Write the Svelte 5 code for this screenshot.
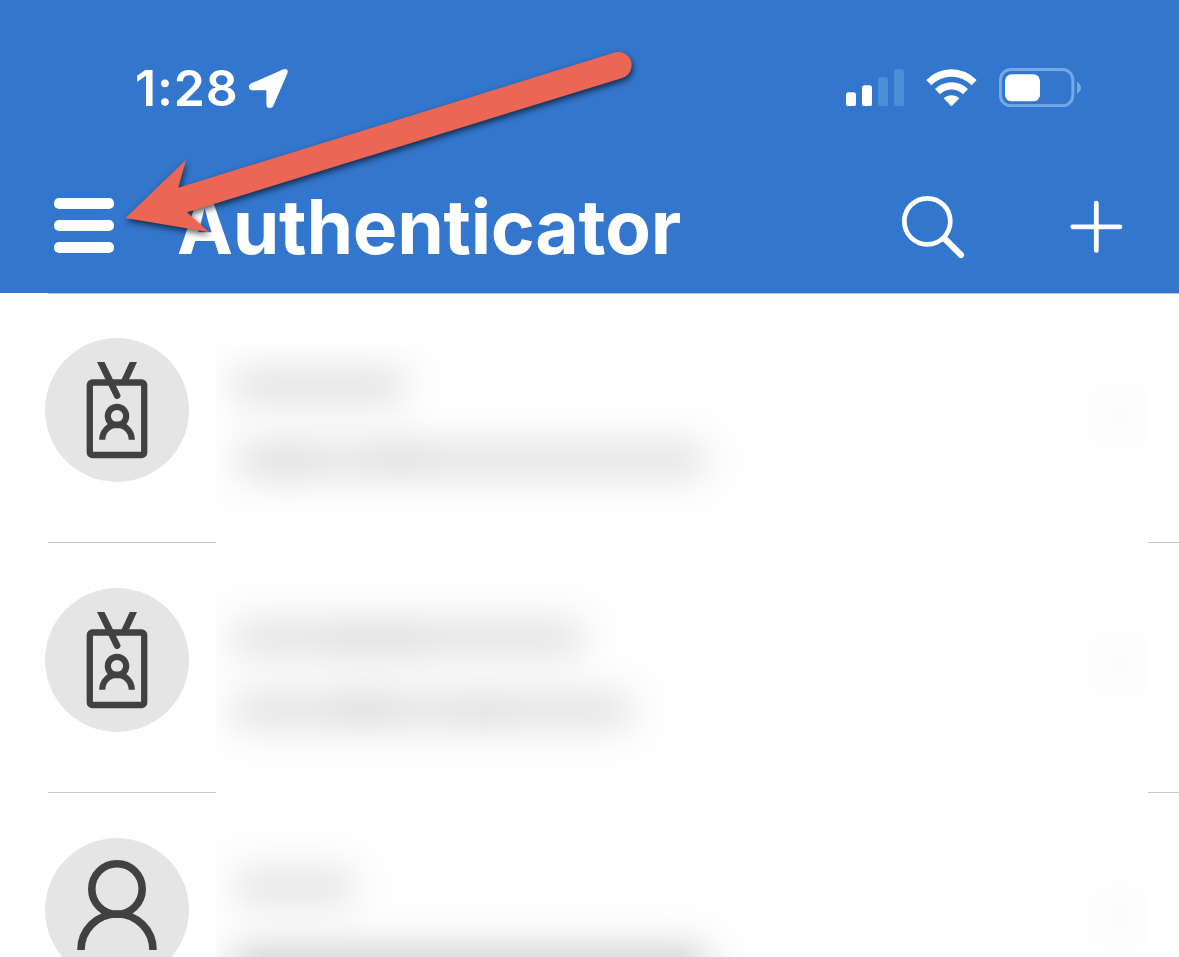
<script>
  const accounts = [
    { icon: 'badge' },
    { icon: 'badge' },
    { icon: 'person' }
  ];

  // Redacted text lines, relative to the blurred panel
  const smudges = [
    { x: 17, y: 24, w: 172, h: 34, o: 0.95 },
    { x: 20, y: 98, w: 468, h: 34, o: 0.95 },
    { x: 50, y: 104, w: 40, h: 28, o: 0.25 },
    { x: 164, y: 96, w: 40, h: 28, o: 0.25 },
    { x: 17, y: 276, w: 350, h: 34, o: 0.95 },
    { x: 110, y: 281, w: 100, h: 32, o: 0.18 },
    { x: 17, y: 348, w: 398, h: 34, o: 0.95 },
    { x: 120, y: 346, w: 56, h: 32, o: 0.25 },
    { x: 248, y: 352, w: 44, h: 32, o: 0.18 },
    { x: 20, y: 524, w: 118, h: 36, o: 0.85 },
    { x: 17, y: 602, w: 474, h: 54, o: 1.5 }
  ];
  const dots = [70, 320, 573];
</script>

{#snippet avatar(kind)}
  <svg class="avatar" viewBox="0 0 144 144" fill="none" stroke="#414141">
    <circle cx="72" cy="72" r="72" fill="#e5e5e5" stroke="none" />
    {#if kind === 'badge'}
      <rect x="44.8" y="44.5" width="54.4" height="72.5" rx="2.5" stroke-width="6.3" />
      <path d="M52 24h7.5L75 56a3.2 3.2 0 0 1-5.8 3.2ZM84.7 24h7.3L82.8 44h-7.4Z" fill="#414141" stroke="none" />
      <circle cx="72" cy="78" r="9.2" stroke-width="6.2" />
      <path d="M57.2 101.800a14.800 15.200 0 0 1 29.600 0" stroke-width="6.200" />
    {:else}
      <circle cx="72" cy="51" r="25.2" stroke-width="7.6" />
      <path d="M36 112a36 36 0 0 1 72 0" stroke-width="7.7" />
    {/if}
  </svg>
{/snippet}

<div class="screen">
  <header>
    <div class="status">
      <div class="clock">
        <span>1:28</span>
        <svg class="location" viewBox="385 54 122 122">
          <path fill="#fff" d="M490 58.5Q498 54.500 502.500 59.500Q506 64 502 73L461 167Q458 174 450 174Q441 174 440.500 164L440 121L397 120.500Q388 119.500 387.500 110Q388 103 395 100Z" />
        </svg>
      </div>
      <div class="indicators">
        <svg class="signal" viewBox="48 56 174 112">
          <rect x="48" y="126" width="30" height="42" rx="8" fill="#fff" />
          <rect x="96" y="105" width="30" height="63" rx="8" fill="#fff" />
          <rect x="144" y="81" width="30" height="87" rx="8" fill="#4c8fd7" />
          <rect x="192" y="57" width="30" height="111" rx="8" fill="#4c8fd7" />
        </svg>
        <svg class="wifi" viewBox="288 56 153 112" fill="#fff">
          <path d="M289 89A104 104 0 0 1 440 89L425 105A84 84 0 0 0 304 105Z" />
          <path d="M315 116A71 71 0 0 1 414 116L399 132A49 49 0 0 0 330 132Z" />
          <path d="M341 144A34 34 0 0 1 388 144L364.500 168Z" />
        </svg>
        <svg class="battery" viewBox="507 53 249 118">
          <rect x="511.500" y="57.500" width="217" height="109" rx="31" fill="none" stroke="#75a9e1" stroke-width="9" />
          <rect x="525" y="72" width="105" height="81" rx="20" fill="#fff" />
          <path d="M741 94Q753 101 753 112T741 130Z" fill="#75a9e1" />
        </svg>
      </div>
    </div>
    <nav>
      <div class="menu"><i></i><i></i><i></i></div>
      <h1>Authenticator</h1>
      <svg class="search" viewBox="0 0 64 64" fill="none" stroke="#fff">
        <circle cx="26.300" cy="26.300" r="23" stroke-width="4.700" />
        <path d="M43.500 43.500L60 60" stroke-width="6.200" stroke-linecap="round" />
      </svg>
      <svg class="plus" viewBox="0 0 54 54" stroke="#fff" stroke-width="4.800" stroke-linecap="round">
        <path d="M27.300 3.200v47.200M3.700 26.800h47.200" />
      </svg>
    </nav>
  </header>

  <main>
    {#each accounts as account}
      <div class="row">{@render avatar(account.icon)}</div>
    {/each}
    <div class="redacted">
      {#each smudges as s}
        <b style="left:{s.x}px;top:{s.y}px;width:{s.w}px;height:{s.h}px;background:rgba(0,0,0,{s.o * 0.12})"></b>
      {/each}
      {#each dots as y}
        <b class="dot" style="top:{y - 12}px"></b>
      {/each}
    </div>
  </main>

  <svg class="arrow" viewBox="0 0 1179 293">
    <path d="M125.500 218L186 159.800L178.300 187.700L614.500 52.600A13.200 13.200 0 0 1 622.300 77.900L187 212.300L209 232Z" />
  </svg>
</div>

<style>
  :global(body) {
    margin: 0;
    background: #fff;
  }
  .screen {
    position: relative;
    width: 1179px;
    height: 957px;
    overflow: hidden;
    background: #fff;
    color: #fff;
    font-family: Inter, sans-serif;
  }
  svg {
    display: block;
    flex: none;
  }
  header {
    box-sizing: border-box;
    height: 293px;
    padding-top: 58px;
    background: #3376cd;
  }
  .status {
    display: flex;
    justify-content: space-between;
    height: 60px;
    padding: 0 97px 0 135px;
  }
  .clock {
    display: flex;
    align-items: center;
    height: 60px;
    font-size: 50px;
    font-weight: 600;
    line-height: 60px;
  }
  .clock span {
    width: 113px;
    letter-spacing: 0.8px;
    white-space: nowrap;
  }
  .location {
    width: 40.67px;
    height: 40.67px;
  }
  .indicators {
    display: flex;
    padding-top: 10px;
  }
  .signal {
    width: 58px;
    height: 37.33px;
    margin-top: 0.67px;
  }
  .wifi {
    width: 51px;
    height: 37.33px;
    margin: 0.67px 0 0 22px;
  }
  .battery {
    width: 83px;
    height: 39.33px;
    margin: -0.33px 0 0 22px;
  }
  nav {
    display: flex;
    align-items: center;
    height: 90px;
    margin-top: 64px;
    padding: 0 54px;
  }
  .menu {
    display: flex;
    flex-direction: column;
    gap: 11px;
    width: 60px;
    margin-bottom: 3px;
  }
  .menu i {
    height: 11px;
    border-radius: 5px;
    background: #fff;
  }
  h1 {
    width: 724px;
    margin: 0 0 0 63px;
    font-size: 75px;
    font-weight: 700;
    line-height: 90px;
    letter-spacing: -0.3px;
  }
  .search {
    width: 64px;
    height: 64px;
  }
  .plus {
    width: 54px;
    height: 54px;
    margin: 0 0 0 104px;
  }
  main {
    position: relative;
    background: linear-gradient(#c6c6c8, #c6c6c8) 48px 0 / 100% 1px no-repeat;
  }
  .row {
    box-sizing: border-box;
    height: 250px;
    padding: 45px;
    background: linear-gradient(#c6c6c6, #c6c6c6) 48px 249px / 100% 1px no-repeat;
  }
  .avatar {
    width: 144px;
    height: 144px;
  }
  .redacted {
    position: absolute;
    left: 216px;
    top: 52px;
    width: 932px;
    height: 612px;
    overflow: hidden;
    background: #fefefe;
  }
  .redacted b {
    position: absolute;
    border-radius: 10px;
    filter: blur(18px);
  }
  .redacted .dot {
    left: 892px;
    width: 24px;
    height: 24px;
    background: rgba(0, 0, 0, 0.035);
  }
  .arrow {
    position: absolute;
    left: 0;
    top: 0;
    width: 1179px;
    height: 293px;
    fill: #ec6656;
    filter: drop-shadow(1px 3px 3px rgba(0, 0, 0, 0.65));
  }
</style>
